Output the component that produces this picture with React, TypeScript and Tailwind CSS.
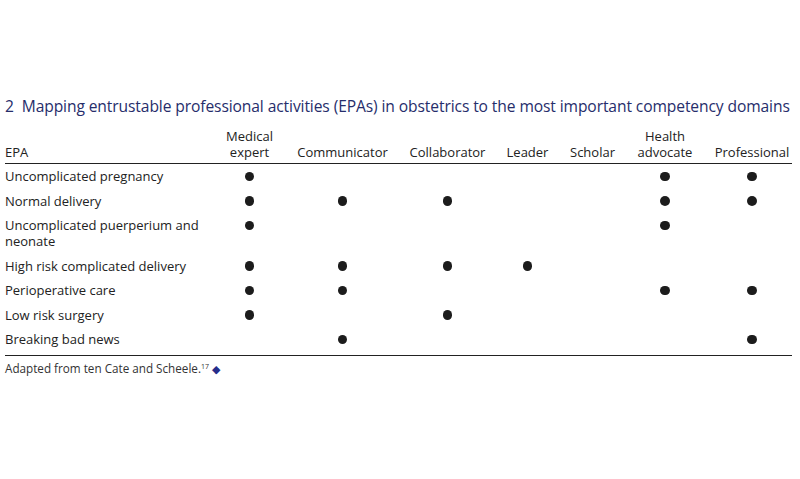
const columns = ["Medical expert", "Communicator", "Collaborator", "Leader", "Scholar", "Health advocate", "Professional"];

// column widths picked so the dots line up under the header text
const grid = "grid grid-cols-[211px_67px_119px_91px_69px_61px_84px_90px]";

type Row = { epa: string; marks: boolean[] };

const rows: Row[] = [
  { epa: "Uncomplicated pregnancy", marks: [true, false, false, false, false, true, true] },
  { epa: "Normal delivery", marks: [true, true, true, false, false, true, true] },
  { epa: "Uncomplicated puerperium and neonate", marks: [true, false, false, false, false, true, false] },
  { epa: "High risk complicated delivery", marks: [true, true, true, true, false, false, false] },
  { epa: "Perioperative care", marks: [true, true, false, false, false, true, true] },
  { epa: "Low risk surgery", marks: [true, false, true, false, false, false, false] },
  { epa: "Breaking bad news", marks: [false, true, false, false, false, false, true] },
];

function Dot() {
  return <span className="block h-[9.5px] w-[9.5px] rounded-full bg-[#1c1c1c]" />;
}

export default function App() {
  return (
    <div className="h-[479px] w-[800px] overflow-hidden bg-white px-[5px] pt-[96px] text-[#222] [font-family:'Open_Sans',sans-serif]">
      <h1 className="whitespace-nowrap text-[15.6px] leading-5 tracking-[-0.1px] text-[#262d6b]">
        2&nbsp;&nbsp;Mapping entrustable professional activities (EPAs) in obstetrics to the most important competency domains
      </h1>

      <div className="mt-3 w-[787px] text-[13px] leading-4">
        {/* Header */}
        <div className={`${grid} items-end border-b-[1.5px] border-[#222] pb-[3px]`}>
          <div>EPA</div>
          {columns.map((c) => (
            <div key={c} className="text-center">
              {c === "Medical expert" || c === "Health advocate" ? (
                <>
                  {c.split(" ")[0]}
                  <br />
                  {c.split(" ")[1]}
                </>
              ) : (
                c
              )}
            </div>
          ))}
        </div>

        {/* Body */}
        <div className="border-b-[1.5px] border-[#222] pb-[3px]">
          {rows.map((r) => (
            <div key={r.epa} className={`${grid} py-[4.25px]`}>
              <div className="whitespace-nowrap">
                {r.epa === "Uncomplicated puerperium and neonate" ? (
                  <>
                    Uncomplicated puerperium and
                    <br />
                    neonate
                  </>
                ) : (
                  r.epa
                )}
              </div>
              {r.marks.map((m, i) => (
                <div key={i} className="flex h-4 items-center justify-center">
                  {m ? <Dot /> : null}
                </div>
              ))}
            </div>
          ))}
        </div>

        <p className="mt-[5px] text-[11.7px] leading-[14px] text-[#333]">
          Adapted from ten Cate and Scheele.<sup className="text-[7px]">17</sup>{" "}
          <span className="text-[11px] text-[#262d8a]">◆</span>
        </p>
      </div>
    </div>
  );
}
